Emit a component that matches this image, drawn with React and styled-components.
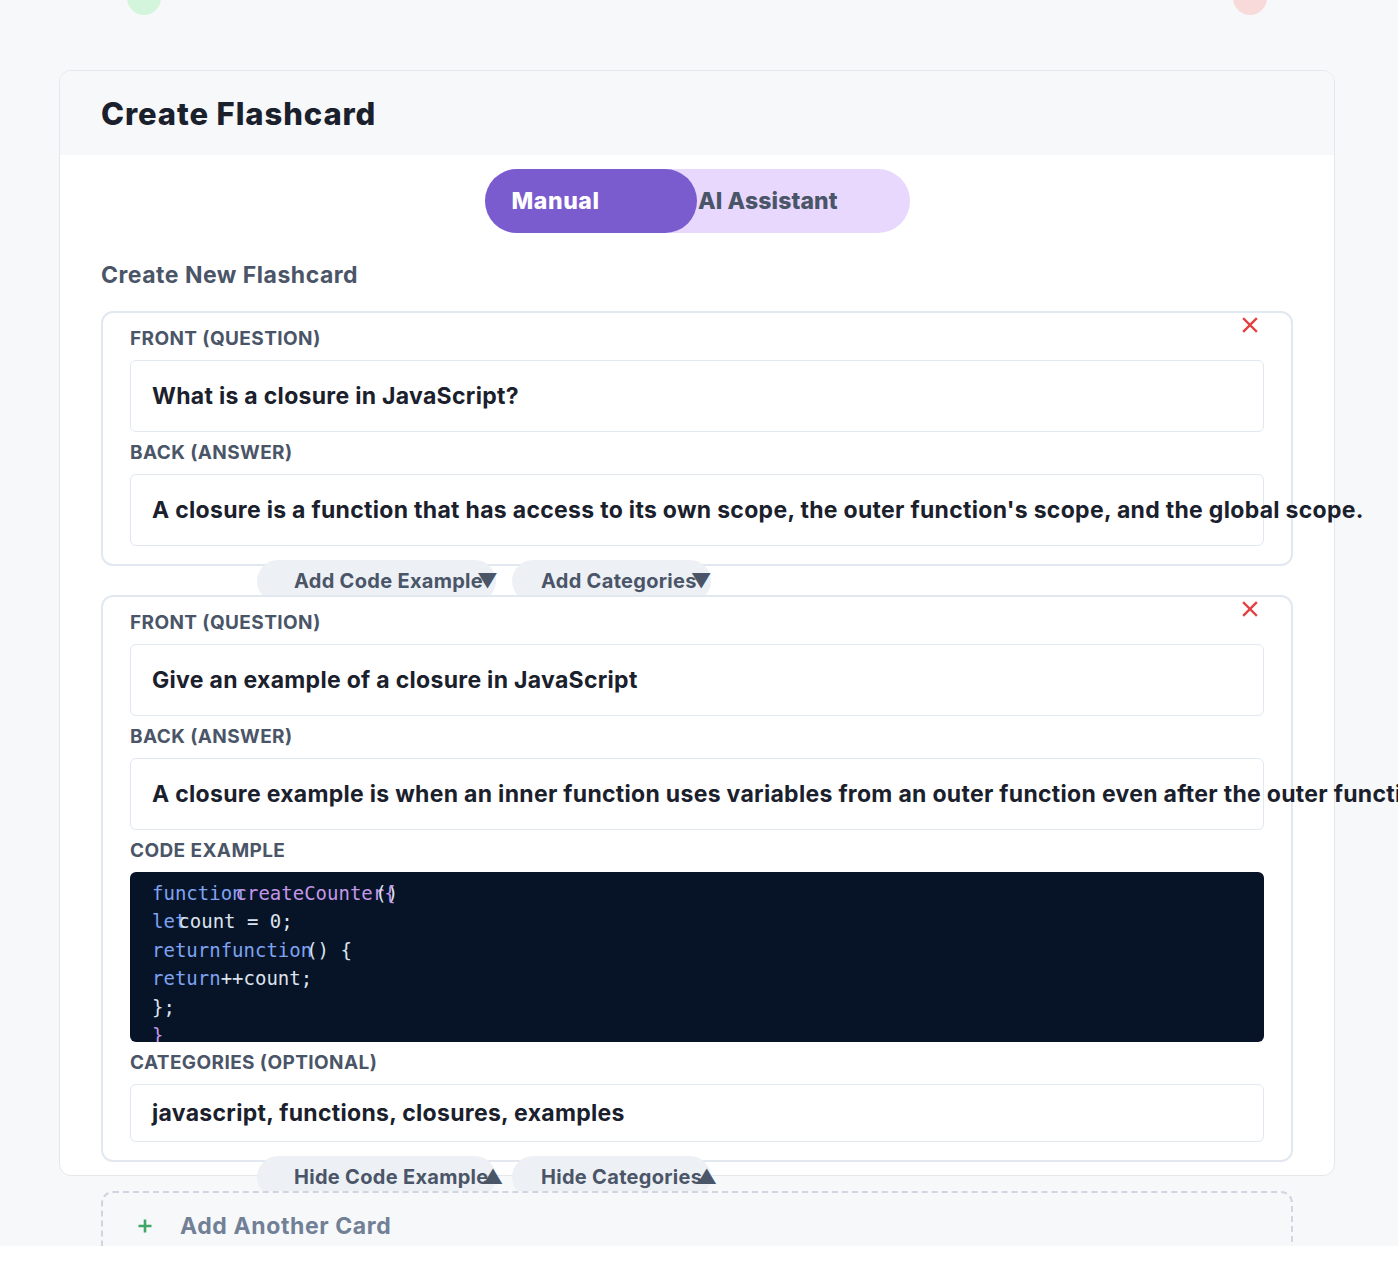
import React from 'react';
import styled, { createGlobalStyle } from 'styled-components';

const GlobalStyle = createGlobalStyle`
  * { box-sizing: border-box; }
  html, body { margin: 0; padding: 0; background: #ffffff; }
  body { font-family: Inter, "Noto Sans", sans-serif; }
`;

const Page = styled.div`
  position: relative;
  height: 1246px;
  overflow: hidden;
  background-color: #f7f8fa;
  padding: 70px 63px 0 59px;
`;

const Blob = styled.div`
  position: absolute;
  top: -19px;
  left: ${(p) => p.$left}px;
  width: 34px;
  height: 34px;
  border-radius: 50%;
  background-color: ${(p) => p.$color};
`;

const Panel = styled.section`
  height: 1106px;
  background-color: #ffffff;
  border: 1px solid #e5e7eb;
  border-radius: 12px;
`;

const PanelHeader = styled.header`
  height: 84px;
  display: flex;
  align-items: center;
  padding: 0 41px;
  background-color: #f7f8fa;
  border-radius: 12px 12px 0 0;
`;

const Title = styled.h1`
  margin: 0;
  font-size: 31px;
  font-weight: 800;
  color: #1a202c;
  letter-spacing: 0.9px;
`;

const PanelBody = styled.div`
  padding: 14px 41px 0;
`;

const Toggle = styled.div`
  display: flex;
  width: 425px;
  height: 64px;
  margin: 0 auto;
  border-radius: 32px;
  background-color: #e9d8fd;
`;

const ToggleButton = styled.button`
  flex: 0 0 50%;
  display: flex;
  align-items: center;
  padding: 0 0 0 ${(p) => (p.$active ? 27 : 1)}px;
  border: none;
  border-radius: 32px;
  background-color: ${(p) => (p.$active ? '#7b5ccf' : 'transparent')};
  color: ${(p) => (p.$active ? '#ffffff' : '#4a5568')};
  font-family: inherit;
  font-size: 23px;
  font-weight: 800;
  letter-spacing: ${(p) => (p.$active ? 0.6 : 0.1)}px;
  white-space: nowrap;
  cursor: pointer;
`;

const SectionTitle = styled.h2`
  margin: 28px 0 22px;
  font-size: 23px;
  font-weight: 700;
  color: #4a5568;
  line-height: 28px;
  letter-spacing: 0.5px;
`;

const Card = styled.div`
  position: relative;
  background-color: #ffffff;
  border: 2px solid #e2e8f0;
  border-radius: 12px;
  padding: 14px 27px 18px;
  display: flex;
  flex-direction: column;
  gap: 9px;
`;

const CloseButton = styled.button`
  position: absolute;
  top: 2px;
  right: 31px;
  width: 20px;
  height: 20px;
  padding: 0;
  border: none;
  background: none;
  display: flex;
  align-items: center;
  justify-content: center;
  cursor: pointer;
`;

const Field = styled.div`
  display: flex;
  flex-direction: column;
  gap: 9px;
`;

const Label = styled.label`
  height: 24px;
  line-height: 24px;
  font-size: 19px;
  font-weight: 700;
  color: #4a5568;
  letter-spacing: 0.4px;
  text-transform: uppercase;
`;

const Input = styled.div`
  height: ${(p) => p.$height}px;
  display: flex;
  align-items: center;
  padding: 0 21px;
  border: 1px solid #e2e8f0;
  border-radius: 6px;
  font-size: 23px;
  font-weight: 700;
  letter-spacing: 0.3px;
  color: #1a202c;
  white-space: nowrap;
`;

const Code = styled.pre`
  height: 170px;
  margin: 0;
  padding: 7px 22px;
  overflow: hidden;
  border-radius: 6px;
  background-color: #071427;
  color: #dce3ee;
  font-family: "DejaVu Sans Mono", "Liberation Mono", monospace;
  font-size: 19px;
  line-height: 28.4px;
`;

const Tok = styled.span`
  color: ${(p) => p.$color || '#dce3ee'};
  margin-left: ${(p) => p.$shift || 0}px;
`;

const ToggleRow = styled.div`
  position: relative;
  display: flex;
  gap: 16px;
  height: 35px;
  margin-top: -6px;
  padding-left: 156px;
`;

const Pill = styled.button`
  flex: none;
  width: ${(p) => p.$width}px;
  height: 42px;
  display: flex;
  align-items: center;
  padding: 0 0 0 ${(p) => p.$pad}px;
  border: none;
  border-radius: 21px;
  background-color: #edf0f5;
  color: #4a5568;
  font-family: inherit;
  font-size: 20px;
  font-weight: 700;
  letter-spacing: 0.3px;
  white-space: nowrap;
  cursor: pointer;
`;

const Arrow = styled.span`
  margin-left: -6px;
`;

const AddCard = styled.div`
  position: relative;
  height: 70px;
  display: flex;
  align-items: center;
  gap: 27px;
  padding: 0 34px;
  border: 2px dashed #cfd6e0;
  border-radius: 12px;
  background-color: #f7f8fa;
  font-size: 23px;
  font-weight: 700;
  letter-spacing: 0.6px;
  color: #718096;
`;

const blue = '#7ea3f1';
const purple = '#c397e8';

function CloseIcon() {
  return (
    <svg width="16" height="16" viewBox="0 0 16 16">
      <path d="M2 2 L14 14 M14 2 L2 14" stroke="#e53e3e" strokeWidth="2.4" strokeLinecap="square" />
    </svg>
  );
}

function PlusIcon() {
  return (
    <svg width="16" height="16" viewBox="0 0 16 16">
      <path d="M8 1.5 V14.5 M1.5 8 H14.5" stroke="#3fa765" strokeWidth="2.6" />
    </svg>
  );
}

function Pills({ open }) {
  return (
    <ToggleRow>
      <Pill $width={239} $pad={37}>
        {open ? 'Hide Code Example' : 'Add Code Example'}
        <Arrow>{open ? '▲' : '▼'}</Arrow>
      </Pill>
      <Pill $width={199} $pad={29}>
        {open ? 'Hide Categories' : 'Add Categories'}
        <Arrow>{open ? '▲' : '▼'}</Arrow>
      </Pill>
    </ToggleRow>
  );
}

export default function App() {
  return (
    <>
      <GlobalStyle />
      <Page>
        <Blob $left={127} $color="#d3f5db" />
        <Blob $left={1233} $color="#f9dada" />
        <Panel>
          <PanelHeader>
            <Title>Create Flashcard</Title>
          </PanelHeader>
          <PanelBody>
            <Toggle>
              <ToggleButton $active>Manual</ToggleButton>
              <ToggleButton>AI Assistant</ToggleButton>
            </Toggle>
            <SectionTitle>Create New Flashcard</SectionTitle>

            <Card>
              <CloseButton aria-label="Remove card">
                <CloseIcon />
              </CloseButton>
              <Field>
                <Label>Front (Question)</Label>
                <Input $height={72}>What is a closure in JavaScript?</Input>
              </Field>
              <Field>
                <Label>Back (Answer)</Label>
                <Input $height={72}>
                  A closure is a function that has access to its own scope, the outer function's scope, and the global scope.
                </Input>
              </Field>
            </Card>
            <Pills />

            <Card>
              <CloseButton aria-label="Remove card">
                <CloseIcon />
              </CloseButton>
              <Field>
                <Label>Front (Question)</Label>
                <Input $height={72}>Give an example of a closure in JavaScript</Input>
              </Field>
              <Field>
                <Label>Back (Answer)</Label>
                <Input $height={72}>
                  A closure example is when an inner function uses variables from an outer function even after the outer function has returned.
                </Input>
              </Field>
              <Field>
                <Label>Code Example</Label>
                <Code>
                  <Tok $color={blue}>function</Tok>
                  <Tok $color={purple} $shift={-8}>createCounter</Tok>
                  <Tok $shift={-9}>()</Tok>
                  <Tok $color={purple} $shift={-14}>{'{'}</Tok>
                  {'\n'}
                  <Tok $color={blue}>let</Tok>
                  <Tok $shift={-8}>count = 0;</Tok>
                  {'\n'}
                  <Tok $color={blue}>return</Tok>
                  <Tok $color={blue}>function</Tok>
                  <Tok $shift={-6}>() {'{'}</Tok>
                  {'\n'}
                  <Tok $color={blue}>return</Tok>
                  <Tok>++count;</Tok>
                  {'\n'}
                  <Tok>{'};'}</Tok>
                  {'\n'}
                  <Tok $color={purple}>{'}'}</Tok>
                </Code>
              </Field>
              <Field>
                <Label>Categories (Optional)</Label>
                <Input $height={58}>javascript, functions, closures, examples</Input>
              </Field>
            </Card>
            <Pills open />

            <AddCard>
              <PlusIcon />
              <span>Add Another Card</span>
            </AddCard>
          </PanelBody>
        </Panel>
      </Page>
    </>
  );
}
